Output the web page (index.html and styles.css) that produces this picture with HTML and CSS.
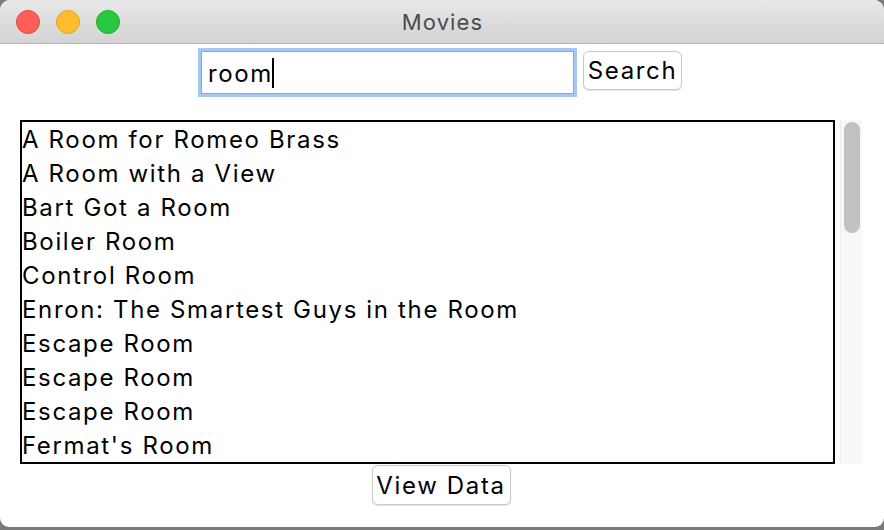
FILE: index.html
```html
<!DOCTYPE html>
<html>
<head>
<meta charset="utf-8">
<title>Movies</title>
<link rel="stylesheet" href="styles.css">
</head>
<body>
<div class="window">
  <div class="titlebar">
    <div class="lights">
      <span class="light red"></span>
      <span class="light yellow"></span>
      <span class="light green"></span>
    </div>
    <div class="title">Movies</div>
  </div>
  <div class="search-row">
    <div class="entry-ring">
      <div class="entry"><span class="entry-text">room</span><span class="caret"></span></div>
    </div>
    <button class="btn search-btn">Search</button>
  </div>
  <div class="list-row">
    <ul class="listbox">
      <li>A Room for Romeo Brass</li>
      <li>A Room with a View</li>
      <li>Bart Got a Room</li>
      <li>Boiler Room</li>
      <li>Control Room</li>
      <li>Enron: The Smartest Guys in the Room</li>
      <li>Escape Room</li>
      <li>Escape Room</li>
      <li>Escape Room</li>
      <li>Fermat's Room</li>
    </ul>
    <div class="scrollbar"><div class="thumb"></div></div>
  </div>
  <div class="bottom-row">
    <button class="btn view-btn">View Data</button>
  </div>
</div>
</body>
</html>
```
FILE: styles.css
```css
html, body {
  margin: 0;
  padding: 0;
}
body {
  width: 884px;
  height: 530px;
  background: #7a7a7a;
  overflow: hidden;
  font-family: Inter, "Liberation Sans", sans-serif;
}
.window {
  width: 884px;
  height: 527px;
  background: #ffffff;
  border-radius: 10px 10px 9px 9px;
  overflow: hidden;
  display: flex;
  flex-direction: column;
}
.titlebar {
  height: 43px;
  border-bottom: 1px solid #b4b4b4;
  background: linear-gradient(#e8e8e8, #d3d3d3);
  display: flex;
  align-items: center;
  position: relative;
}
.lights {
  display: flex;
  gap: 16px;
  padding-left: 16px;
}
.light {
  width: 22px;
  height: 22px;
  border-radius: 50%;
  display: block;
}
.red { background: #ff5f57; border: 1px solid #e2463f; }
.yellow { background: #febc2e; border: 1px solid #e1a325; }
.green { background: #28c840; border: 1px solid #1dad2b; }
.title {
  position: absolute;
  left: 0;
  right: 0;
  top: 0;
  bottom: 0;
  display: flex;
  align-items: center;
  justify-content: center;
  font-size: 22px;
  color: #4b4b4b;
  letter-spacing: 1.1px;
  padding-left: 1px;
  pointer-events: none;
}
.search-row {
  display: flex;
  justify-content: center;
  align-items: flex-start;
  gap: 6px;
  padding-top: 4px;
  padding-right: 4px;
}
.entry-ring {
  width: 373px;
  height: 43px;
  border: 3px solid #a4c9f4;
}
.entry {
  height: 41px;
  border: 1px solid #7faae2;
  display: flex;
  align-items: center;
  padding-left: 6px;
  padding-top: 1px;
  box-sizing: border-box;
  height: 43px;
  font-size: 24px;
  letter-spacing: 1.65px;
  color: #000;
}
.caret {
  display: inline-block;
  width: 2px;
  height: 30px;
  background: #000;
  margin-left: -1px;
}
.btn {
  font-family: Inter, "Liberation Sans", sans-serif;
  font-size: 24px;
  letter-spacing: 1.65px;
  color: #000;
  background: #fff;
  border: 1px solid #c9c9c9;
  border-radius: 6px;
  box-shadow: 0 1px 1px rgba(0, 0, 0, 0.12);
  padding: 0;
  margin: 0;
}
.search-btn {
  width: 99px;
  height: 39px;
  margin-top: 3px;
}
.list-row {
  display: flex;
  margin-top: 23px;
  padding-left: 20px;
  gap: 5px;
}
.listbox {
  list-style: none;
  margin: 0;
  padding: 0;
  width: 811px;
  height: 340px;
  border: 2px solid #000;
  overflow: hidden;
}
.listbox li {
  height: 34px;
  line-height: 34px;
  padding-top: 1px;
  box-sizing: border-box;
  font-size: 24px;
  letter-spacing: 1.65px;
  color: #000;
  white-space: nowrap;
}
.scrollbar {
  width: 22px;
  height: 344px;
  background: #f7f7f7;
  border-left: 1px solid #eeeeee;
  display: flex;
  justify-content: center;
  padding-top: 2px;
  box-sizing: border-box;
}
.thumb {
  width: 16px;
  height: 111px;
  background: #c2c2c2;
  border-radius: 8px;
}
.bottom-row {
  display: flex;
  justify-content: center;
  padding-top: 1px;
  padding-right: 2px;
}
.view-btn {
  width: 139px;
  height: 40px;
}
```
